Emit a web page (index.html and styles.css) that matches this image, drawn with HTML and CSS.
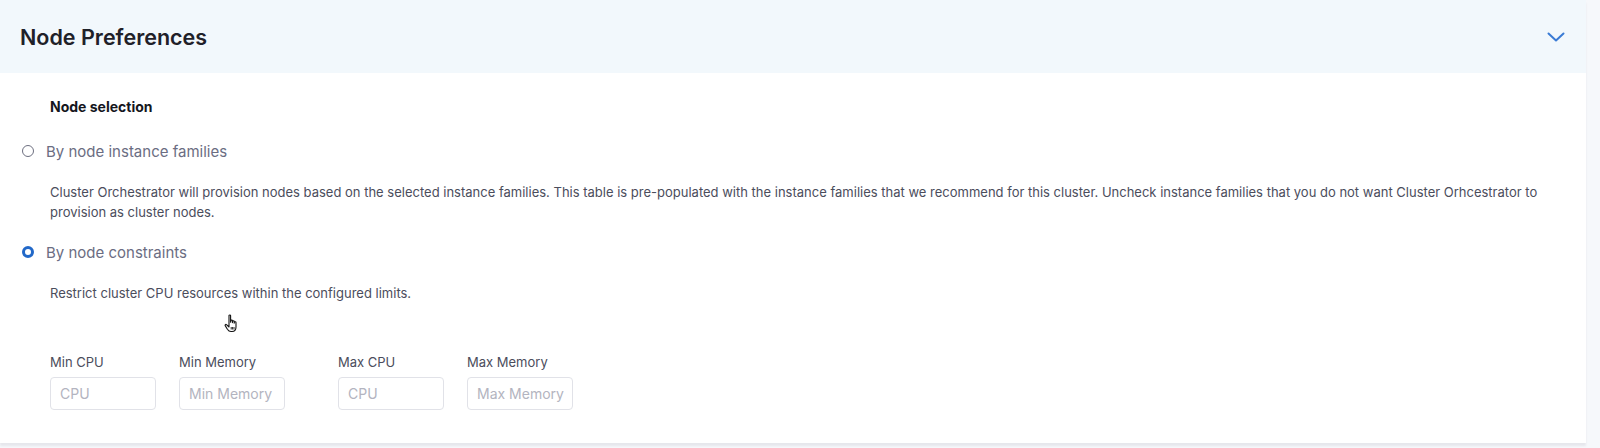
FILE: index.html
```html
<!DOCTYPE html>
<html>
<head>
<meta charset="utf-8">
<link rel="stylesheet" href="styles.css">
</head>
<body>
<div class="card">
  <div class="header">
    <h2 class="title">Node Preferences</h2>
    <svg class="chevron" width="18" height="10" viewBox="0 0 18 10"><path d="M1.5 1.5 L9 8.5 L16.5 1.5" fill="none" stroke="#3a7bd5" stroke-width="2" stroke-linecap="round" stroke-linejoin="round"/></svg>
  </div>
  <div class="body">
    <div class="section-title">Node selection</div>
    <label class="radio-row first">
      <span class="radio"></span>
      <span class="radio-label">By node instance families</span>
    </label>
    <p class="desc">Cluster Orchestrator will provision nodes based on the selected instance families. This table is pre-populated with the instance families that we recommend for this cluster. Uncheck instance families that you do not want Cluster Orhcestrator to provision as cluster nodes.</p>
    <label class="radio-row">
      <span class="radio checked"></span>
      <span class="radio-label">By node constraints</span>
    </label>
    <p class="desc">Restrict cluster CPU resources within the configured limits.</p>
    <div class="fields">
      <div class="group">
        <div class="field"><div class="field-label">Min CPU</div><div class="input">CPU</div></div>
        <div class="field"><div class="field-label">Min Memory</div><div class="input">Min Memory</div></div>
      </div>
      <div class="group">
        <div class="field"><div class="field-label">Max CPU</div><div class="input">CPU</div></div>
        <div class="field"><div class="field-label">Max Memory</div><div class="input">Max Memory</div></div>
      </div>
    </div>
    <svg class="cursor" width="16" height="20" viewBox="0 0 16 20">
      <path d="M5 1.5 C5 0.8 6.6 0.8 6.6 1.5 L6.6 8.2 L6.8 6.6 C6.9 5.9 8.4 5.9 8.4 6.7 L8.4 8.6 L8.6 7.3 C8.7 6.6 10.2 6.6 10.2 7.4 L10.2 9.2 L10.4 8.2 C10.5 7.5 12 7.6 12 8.4 L12 13 C12 15.5 10.6 17.5 8 17.5 L7 17.5 C5.3 17.5 4.3 16.6 3.4 15.2 L1.2 11.6 C0.7 10.8 1.8 10 2.5 10.7 L5 13 Z" fill="#fff" stroke="#111" stroke-width="1.1" stroke-linejoin="round"/>
      <path d="M7.2 13 L7.2 15.5 M8.6 13 L8.6 15.5 M10 13 L10 15.5" stroke="#111" stroke-width="0.9"/>
    </svg>
  </div>
</div>
</body>
</html>
```

FILE: styles.css
```css
* { box-sizing: border-box; }
html, body { margin: 0; padding: 0; }
body {
  background: #f6f8fb;
  font-family: Inter, "Noto Sans", "Liberation Sans", sans-serif;
  width: 1600px;
  height: 448px;
  overflow: hidden;
}
.card {
  width: 1586px;
  height: 443px;
  background: #ffffff;
  box-shadow: 0 3px 2px #e6e7ec, -1px 0 1px #eceef2;
  position: relative;
}
.header {
  height: 73px;
  background: #f2f8fc;
  display: flex;
  align-items: center;
  justify-content: space-between;
  padding: 0 21px 0 20px;
}
.title {
  margin: 0;
  font-size: 21.5px;
  font-weight: 600;
  color: #1f2129;
}
.chevron { display: block; margin-top: 1px; }
.body {
  padding: 25px 0 0 22px;
  position: relative;
}
.section-title {
  margin-left: 28px;
  font-size: 14px;
  line-height: 18px;
  font-weight: 700;
  color: #15161d;
}
.radio-row {
  display: flex;
  align-items: center;
  height: 20px;
  margin-top: 20px;
}
.radio-row.first { margin-top: 25px; }
.radio {
  width: 12px;
  height: 12px;
  border-radius: 50%;
  border: 1.3px solid #6d6f80;
  background: #fff;
  flex: none;
}
.radio.checked {
  border: 3.5px solid #2268c8;
}
.radio-label {
  margin-left: 12px;
  font-size: 15px;
  color: #6b6d82;
}
.desc {
  margin: 21px 0 0 28px;
  width: 1500px;
  font-size: 13px;
  line-height: 20px;
  color: #4b4d5c;
}
.fields {
  display: flex;
  gap: 53px;
  margin: 51px 0 0 28px;
}
.group { display: flex; gap: 23px; }
.field-label {
  font-size: 13px;
  line-height: 16px;
  color: #4b4d5c;
}
.input {
  margin-top: 7px;
  width: 106px;
  height: 33px;
  border: 1px solid #e1e2e8;
  border-radius: 4px;
  padding-left: 9px;
  display: flex;
  align-items: center;
  font-size: 14px;
  color: #b3b4c0;
}
.cursor {
  position: absolute;
  left: 224px;
  top: 241px;
}
```
